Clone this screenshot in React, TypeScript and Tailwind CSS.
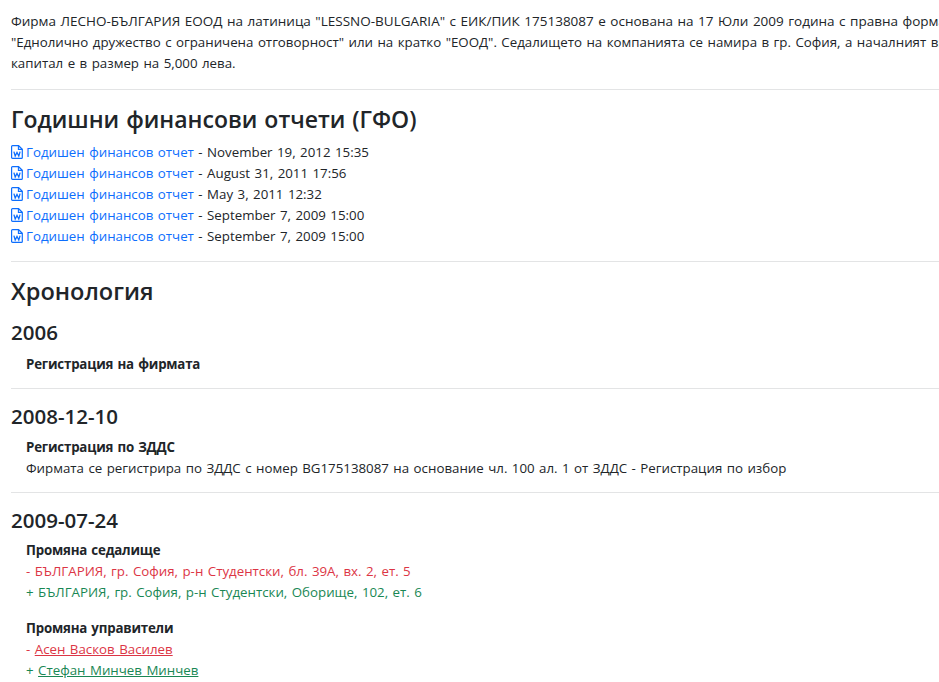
const Icon = () => (
  <svg width="12" height="14" viewBox="0 0 12 14" className="inline-block shrink-0 mr-[3px] align-[-2px]" fill="none">
    <path d="M1.5 .7H7.6L11.3 4.2V12.4a.9.9 0 0 1-.9.9H1.5a.9.9 0 0 1-.9-.9V1.6a.9.9 0 0 1 .9-.9Z" stroke="#0d6efd" strokeWidth="1.2" />
    <path d="M7.4 .8V4.4H11.2" stroke="#0d6efd" strokeWidth="1.1" />
    <path d="M2.9 6.6 4.2 11 6 7.4 7.8 11 9.1 6.6" stroke="#0d6efd" strokeWidth="1.3" />
  </svg>
);

const reports = [
  "November 19, 2012 15:35",
  "August 31, 2011 17:56",
  "May 3, 2011 12:32",
  "September 7, 2009 15:00",
  "September 7, 2009 15:00",
];

const Hr = ({ className }: { className: string }) => <hr className={"border-0 border-t border-[#e3e4e5] mb-[15px] " + className} />;

const Bold = ({ children }: { children: string }) => (
  <b className="font-bold tracking-[-0.2px]">{children}</b>
);

export default function App() {
  return (
    <div className="h-[682px] overflow-hidden bg-white text-[#212529] text-[13.3px] leading-[21px] [word-spacing:1px] pl-[11px] pt-[11px] whitespace-nowrap" style={{ fontFamily: '"Open Sans", "Noto Sans", sans-serif' }}>
      <p>
        <span className="text-[13.5px]">Фирма ЛЕСНО-БЪЛГАРИЯ ЕООД на латиница "LESSNO-BULGARIA" с ЕИК/ПИК 175138087 е основана на 17 Юли 2009 година с правна форма</span>
        <br />
        "Еднолично дружество с ограничена отговорност" или на кратко "ЕООД". Седалището на компанията се намира в гр. София, а началният внесен
        <br />
        капитал е в размер на 5,000 лева.
      </p>
      <Hr className="mt-[15px]" />
      <h2 className="text-[23px] leading-[29px] font-semibold mb-[8px]">Годишни финансови отчети (ГФО)</h2>
      <ul>
        {reports.map((r, i) => (
          <li key={i}>
            <Icon />
            <a className="text-[#0d6efd]">Годишен финансов отчет</a> - {r}
          </li>
        ))}
      </ul>
      <Hr className="mt-[14px]" />
      <h2 className="text-[23.6px] leading-[29px] font-semibold mb-[14px]">Хронология</h2>
      <h3 className="text-[20.5px] leading-[25px] font-semibold mb-[9px]">2006</h3>
      <div className="pl-[15px]"><Bold>Регистрация на фирмата</Bold></div>
      <Hr className="mt-[13px]" />
      <h3 className="text-[20.5px] leading-[25px] font-semibold mb-[8px]">2008-12-10</h3>
      <div className="pl-[15px]">
        <Bold>Регистрация по ЗДДС</Bold>
        <div>Фирмата се регистрира по ЗДДС с номер BG175138087 на основание чл. 100 ал. 1 от ЗДДС - Регистрация по избор</div>
      </div>
      <Hr className="mt-[13px]" />
      <h3 className="text-[20.5px] leading-[25px] font-semibold mb-[7px]">2009-07-24</h3>
      <div className="pl-[15px]">
        <Bold>Промяна седалище</Bold>
        <div className="text-[#dc3545]">- БЪЛГАРИЯ, гр. София, р-н Студентски, бл. 39А, вх. 2, ет. 5</div>
        <div className="text-[#198754]">+ БЪЛГАРИЯ, гр. София, р-н Студентски, Оборище, 102, ет. 6</div>
        <div className="mt-[15px]"><Bold>Промяна управители</Bold></div>
        <div className="text-[#dc3545]">- <a className="underline">Асен Васков Василев</a></div>
        <div className="text-[#198754]">+ <a className="underline">Стефан Минчев Минчев</a></div>
      </div>
    </div>
  );
}
